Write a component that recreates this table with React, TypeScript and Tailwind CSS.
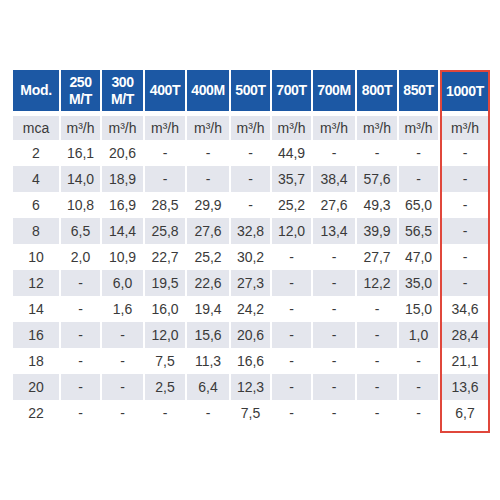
import React from "react";

const cols = ["250\nM/T", "300\nM/T", "400T", "400M", "500T", "700T", "700M", "800T", "850T"];

const rows: { p: string; v: string[]; last: string }[] = [
  { p: "2", v: ["16,1", "20,6", "-", "-", "-", "44,9", "-", "-", "-"], last: "-" },
  { p: "4", v: ["14,0", "18,9", "-", "-", "-", "35,7", "38,4", "57,6", "-"], last: "-" },
  { p: "6", v: ["10,8", "16,9", "28,5", "29,9", "-", "25,2", "27,6", "49,3", "65,0"], last: "-" },
  { p: "8", v: ["6,5", "14,4", "25,8", "27,6", "32,8", "12,0", "13,4", "39,9", "56,5"], last: "-" },
  { p: "10", v: ["2,0", "10,9", "22,7", "25,2", "30,2", "-", "-", "27,7", "47,0"], last: "-" },
  { p: "12", v: ["-", "6,0", "19,5", "22,6", "27,3", "-", "-", "12,2", "35,0"], last: "-" },
  { p: "14", v: ["-", "1,6", "16,0", "19,4", "24,2", "-", "-", "-", "15,0"], last: "34,6" },
  { p: "16", v: ["-", "-", "12,0", "15,6", "20,6", "-", "-", "-", "1,0"], last: "28,4" },
  { p: "18", v: ["-", "-", "7,5", "11,3", "16,6", "-", "-", "-", "-"], last: "21,1" },
  { p: "20", v: ["-", "-", "2,5", "6,4", "12,3", "-", "-", "-", "-"], last: "13,6" },
  { p: "22", v: ["-", "-", "-", "-", "7,5", "-", "-", "-", "-"], last: "6,7" },
];

const gridCols = "grid grid-cols-[46px_39px_41px_40px_42px_39px_39px_42px_40px_39px] gap-x-[2px]";

export default function App() {
  return (
    <div
      className="w-[500px] h-[500px] bg-white pt-[70px] pl-[13px] text-[14px] text-[#3a3a3a]"
      style={{ fontFamily: '"Liberation Sans", Arial, sans-serif' }}
    >
      <div className="flex items-start">
        <div className="flex flex-col">
          <div className={gridCols}>
            <div className="h-[41px] bg-[#1c58a4] text-white font-bold flex items-center justify-center tracking-[-0.3px]">
              Mod.
            </div>
            {cols.map((c) => (
              <div
                key={c}
                className="h-[41px] bg-[#1c58a4] text-white font-bold flex items-center justify-center text-center whitespace-pre leading-[17px] tracking-[-0.4px]"
              >
                {c}
              </div>
            ))}
          </div>
          <div className={gridCols + " mt-[5px]"}>
            <div className="h-[24px] bg-[#e4e6ed] flex items-center justify-center">mca</div>
            {cols.map((c) => (
              <div key={c} className="h-[24px] bg-[#e4e6ed] flex items-center justify-center">
                m³/h
              </div>
            ))}
            {rows.map((r, i) => {
              const shade = i % 2 === 1 ? "bg-[#e4e6ed]" : "bg-white";
              return (
                <React.Fragment key={r.p}>
                  <div className={"h-[26px] flex items-center justify-center " + shade}>{r.p}</div>
                  {r.v.map((x, j) => (
                    <div key={j} className={"h-[26px] flex items-center justify-center " + shade}>
                      {x}
                    </div>
                  ))}
                </React.Fragment>
              );
            })}
          </div>
        </div>
        <div className="ml-[2px] w-[50px] border-2 border-[#e0473b] pb-[5px] flex flex-col">
          <div className="h-[39px] bg-[#1c58a4] text-white font-bold flex items-center justify-center tracking-[-0.3px]">
            1000T
          </div>
          <div className="mt-[5px] h-[24px] bg-[#e4e6ed] flex items-center justify-center">m³/h</div>
          {rows.map((r, i) => (
            <div
              key={r.p}
              className={"h-[26px] flex items-center justify-center " + (i % 2 === 1 ? "bg-[#e4e6ed]" : "bg-white")}
            >
              {r.last}
            </div>
          ))}
        </div>
      </div>
    </div>
  );
}
